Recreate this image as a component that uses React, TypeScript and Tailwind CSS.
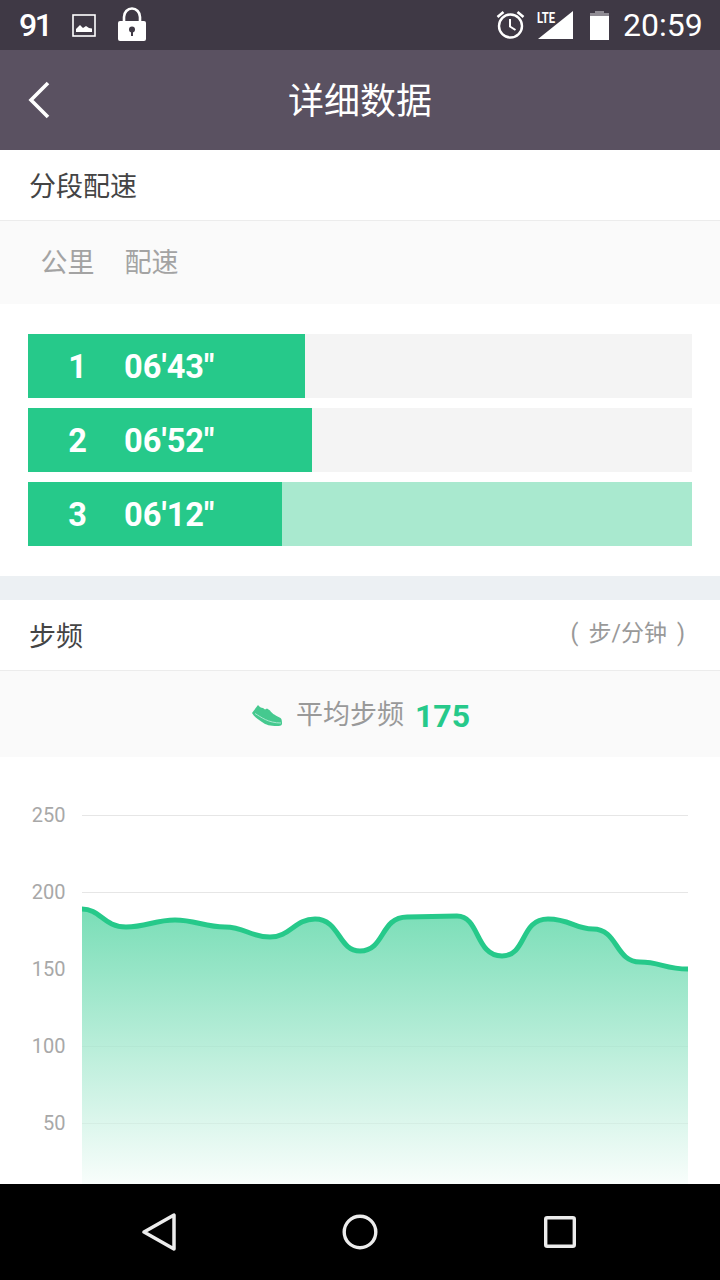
const font = "font-['Roboto','Noto_Sans_CJK_SC',sans-serif]";

const splits = [
  { km: 1, pace: "06'43\"", width: 277, track: "bg-[#f4f4f4]" },
  { km: 2, pace: "06'52\"", width: 284, track: "bg-[#f4f4f4]" },
  { km: 3, pace: "06'12\"", width: 254, track: "bg-[#a9e9cf]" },
];

const ticks = [
  { label: "250", y: 58, stroke: "#e6e6e6", opacity: 1 },
  { label: "200", y: 135, stroke: "#e6e6e6", opacity: 1 },
  { label: "150", y: 212, stroke: "#000", opacity: 0 },
  { label: "100", y: 289, stroke: "#000", opacity: 0.025 },
  { label: "50", y: 366, stroke: "#000", opacity: 0.035 },
];

// y is relative to the top of the chart block (757)
const line =
  "M82 152 C100 152 104 170 126 170 C146 170 155 163 175 163 C195 163 205 170 225 170 C245 170 250 180 270 180 C290 180 295 162 315 162 C340 162 338 194 360 194 C385 194 380 160 407 160 L457 159 C480 159 475 199 502 199 C527 199 520 162 548 162 C570 162 575 172 593 172 C618 172 615 205 640 205 C660 205 665 212 688 212";

function StatusBar() {
  return (
    <div className="flex h-[50px] items-center justify-between bg-[#3f3945] pl-[19px] pr-[16px] text-white">
      <div className="flex items-center">
        <span className="w-[32px] whitespace-nowrap text-[32px] font-medium leading-none tracking-[-2.5px]">91</span>
        <svg width="24" height="24" viewBox="0 0 24 24" className="ml-[21px]">
          <rect x="1" y="2" width="22" height="21" fill="none" stroke="#fff" strokeWidth="1.6" />
          <path d="M4 19 L4 16 L8 12 L11 15 L14 13 L17 15 L20 15.5 L20 19 Z" fill="#fff" />
        </svg>
        <svg width="30" height="36" viewBox="0 0 30 36" className="ml-[21px]">
          <path d="M7 16 V10 A8 8.500 0 0 1 23 10 V16" fill="none" stroke="#fff" strokeWidth="2.6" />
          <rect x="1" y="14" width="28" height="20" rx="2" fill="#fff" />
          <circle cx="15" cy="22.500" r="3" fill="#3f3945" />
          <rect x="14" y="23" width="2" height="6" fill="#3f3945" />
        </svg>
      </div>
      <div className="flex items-center">
        <svg width="30" height="30" viewBox="0 0 30 30">
          <circle cx="14.500" cy="16" r="11.500" fill="none" stroke="#fff" strokeWidth="2.400" />
          <path d="M14 9 V16.500 L19.500 20" fill="none" stroke="#fff" strokeWidth="2" />
          <path d="M1.500 7 L7.500 2 M27.500 7 L21.500 2" stroke="#fff" strokeWidth="2.600" />
        </svg>
        <div className="relative ml-[11px] h-[30px] w-[36px]">
          <svg width="36" height="30" viewBox="0 0 36 30" className="absolute left-[1px] top-0">
            <path d="M0 29 L35 1 V29 Z" fill="#fff" />
          </svg>
          <span className="absolute left-0 top-[-1px] origin-top-left scale-x-75 text-[15px] font-bold leading-[18px]">LTE</span>
        </div>
        <svg width="19" height="29" viewBox="0 0 19 29" className="ml-[17px]">
          <rect x="5" y="0" width="9" height="3" fill="#8f8b93" />
          <rect x="0" y="2" width="19" height="27" fill="#8f8b93" />
          <rect x="0" y="5" width="19" height="24" fill="#fff" />
        </svg>
        <span className="ml-[14px] w-[81px] text-[32px] leading-none">20:59</span>
      </div>
    </div>
  );
}

function Header() {
  return (
    <div className="relative flex h-[100px] items-center justify-center bg-[#5a5161] pt-[4px]">
      <svg width="24" height="38" viewBox="0 0 24 38" className="absolute left-[28px] top-[31px]">
        <path d="M20 2 L3 19 L20 36" fill="none" stroke="#fff" strokeWidth="3.600" />
      </svg>
      <span className="text-[36px] leading-none text-white">详细数据</span>
    </div>
  );
}

function Shoe() {
  return (
    <svg width="30" height="24" viewBox="0 0 30 24">
      <path
        d="M0 9 L6 1 C7.500 3 9 4 11 4 L13 5.500 L15 4.500 L18 6.500 C20 10 25 12 28.500 14 C30 15 30 18 30 20 C29.500 22 27 22 25 22 C18 22 14 21 10 18 C6 15.500 2 12.500 0 9 Z"
        fill="#45c98f"
      />
      <path d="M3 9.500 C9 13 16 19 29 19" fill="none" stroke="#a9e9cf" strokeWidth="1" />
    </svg>
  );
}

function Chart() {
  return (
    <svg width="720" height="427" viewBox="0 0 720 427" className="block">
      <defs>
        <linearGradient id="stepFill" x1="0" y1="150" x2="0" y2="427" gradientUnits="userSpaceOnUse">
          <stop offset="0" stopColor="#26c98a" stopOpacity="0.62" />
          <stop offset="1" stopColor="#26c98a" stopOpacity="0.03" />
        </linearGradient>
      </defs>
      <path d={`${line} V427 H82 Z`} fill="url(#stepFill)" />
      {ticks.map((t) => (
        <g key={t.label}>
          <line x1="82" x2="688" y1={t.y + 0.5} y2={t.y + 0.5} stroke={t.stroke} strokeOpacity={t.opacity} strokeWidth="1" />
          <text x="65.500" y={t.y + 6.5} textAnchor="end" fontSize="20" fill="#a8a8a8" fontFamily="Roboto, sans-serif">
            {t.label}
          </text>
        </g>
      ))}
      <path d={line} fill="none" stroke="#26c98a" strokeWidth="5" />
    </svg>
  );
}

function NavBar() {
  return (
    <div className="flex h-[96px] items-center justify-center bg-black pr-[2px]">
      <div className="flex w-[434px] items-center justify-between">
        <svg width="34" height="38" viewBox="0 0 34 38">
          <path d="M2 19 L32 2 V36 Z" fill="none" stroke="#ececec" strokeWidth="3.500" strokeLinejoin="round" />
        </svg>
        <svg width="36" height="36" viewBox="0 0 36 36">
          <circle cx="18" cy="18" r="15.800" fill="none" stroke="#ececec" strokeWidth="3.400" />
        </svg>
        <svg width="32" height="32" viewBox="0 0 32 32">
          <rect x="1.700" y="1.700" width="28.600" height="28.600" rx="1.500" fill="none" stroke="#ececec" strokeWidth="3.400" />
        </svg>
      </div>
    </div>
  );
}

export default function App() {
  return (
    <div className={`flex h-[1280px] w-[720px] flex-col overflow-hidden bg-white ${font}`}>
      <StatusBar />
      <Header />

      {/* Splits */}
      <div className="flex h-[71px] items-center border-b border-[#ececec] px-[29px] pt-[5px] text-[27px] text-[#444]">分段配速</div>
      <div className="flex h-[83px] items-center bg-[#fafafa] pl-[40.500px] pt-[2px] text-[27px] text-[#a3a3a3]">
        <span className="w-[84px]">公里</span>
        <span>配速</span>
      </div>
      <div className="flex h-[272px] flex-col gap-[10px] px-[28px] py-[30px]">
        {splits.map((s) => (
          <div key={s.km} className={`h-[64px] ${s.track}`}>
            <div className="flex h-full items-center bg-[#26c98a] pt-[2px] text-[32.600px] font-bold text-white" style={{ width: s.width }}>
              <span className="w-[96px] pl-[3px] text-center">{s.km}</span>
              <span>{s.pace}</span>
            </div>
          </div>
        ))}
      </div>
      <div className="h-[24px] bg-[#ecf0f3]" />

      {/* Cadence */}
      <div className="flex h-[71px] items-center justify-between border-b border-[#ececec] pl-[29px] pr-[35px] pt-[5px]">
        <span className="text-[27px] text-[#444]">步频</span>
        <span className="mb-[7px] flex gap-[10px] text-[23px] text-[#999]">
          <span>(</span>
          <span>步/分钟</span>
          <span>)</span>
        </span>
      </div>
      <div className="flex h-[86px] items-center justify-center bg-[#fafafa] pl-[1px] pt-[3px]">
        <span className="mr-[1px] ml-[1px] flex">
          <Shoe />
        </span>
        <span className="ml-[13px] text-[27px] text-[#999]">平均步频</span>
        <span className="ml-[11px] text-[32px] font-bold text-[#26c98a]">175</span>
      </div>
      <Chart />
      <NavBar />
    </div>
  );
}
